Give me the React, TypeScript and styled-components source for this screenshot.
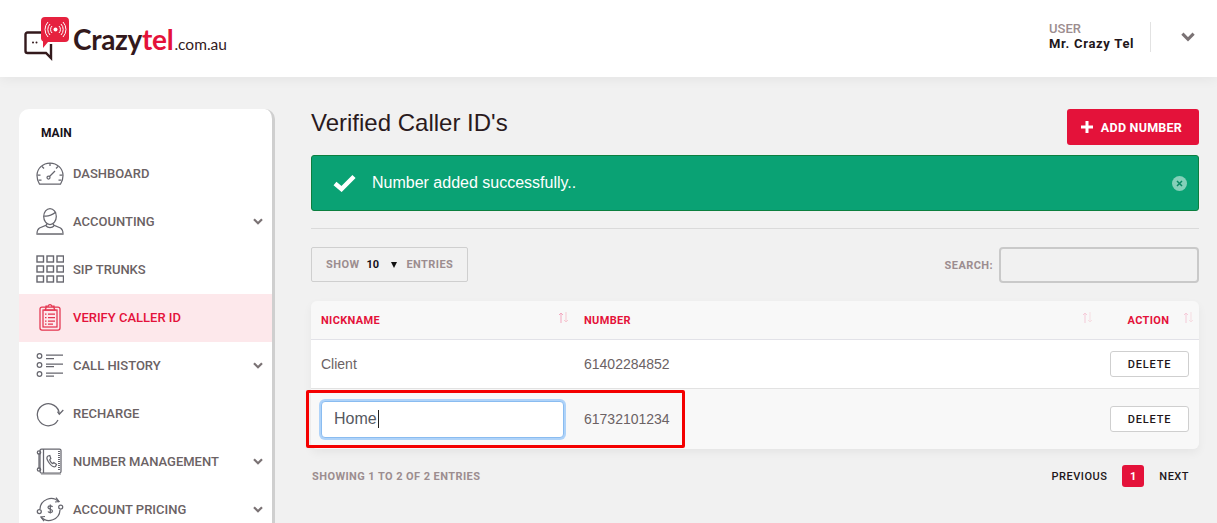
import React from "react";
import styled, { createGlobalStyle } from "styled-components";

const GlobalStyle = createGlobalStyle`
  html, body {
    margin: 0;
    height: 523px;
    overflow: hidden;
    background: #f1f1f1;
    font-family: "Liberation Sans", Arial, sans-serif;
  }
  * { box-sizing: border-box; }
`;

const Page = styled.div`
  width: 1217px;
  height: 523px;
  overflow: hidden;
  position: relative;
`;

const Header = styled.header`
  height: 77px;
  background: #fff;
  box-shadow: 0 2px 12px rgba(0, 0, 0, 0.06);
  display: flex;
  align-items: center;
  justify-content: space-between;
  padding: 0 22px 0 24px;
  position: relative;
`;

const Logo = styled.div`
  display: flex;
  align-items: flex-start;
  height: 44px;
  margin-top: 1px;
`;

const LogoText = styled.div`
  font-family: Lato, "Liberation Sans", sans-serif;
  font-weight: 700;
  font-size: 28px;
  letter-spacing: -0.3px;
  line-height: 30px;
  color: #33191c;
  margin: 7px 0 0 -1px;
  white-space: nowrap;
  em {
    font-style: normal;
    color: #e4123a;
  }
  small {
    font-size: 15.5px;
    font-weight: 400;
    letter-spacing: 0;
    margin-left: 1px;
  }
`;

const UserBox = styled.div`
  display: flex;
  align-items: center;
  margin-top: -3px;
`;

const UserInfo = styled.div`
  font-family: Roboto, sans-serif;
  width: 102px;
  height: 30px;
  border-right: 1px solid #e2e2e2;
  font-size: 13px;
  line-height: 15px;
  margin-right: 30px;
  span {
    display: block;
    margin-top: -1px;
    color: #9c8d8f;
    font-weight: 500;
  }
  strong {
    display: block;
    color: #22161a;
    font-weight: 700;
    letter-spacing: 0.7px;
  }
`;

const Body = styled.div`
  display: flex;
  padding: 32px 18px 0 19px;
  gap: 36px;
`;

const Sidebar = styled.nav`
  width: 256px;
  height: 500px;
  flex: none;
  background: #fff;
  border-right: 3px solid #cfcfcf;
  border-radius: 10px 10px 0 0;
  padding-top: 17px;
`;

const SideTitle = styled.div`
  font-family: Roboto, sans-serif;
  font-size: 12px;
  font-weight: 700;
  color: #17121a;
  line-height: 14px;
  padding-left: 22px;
  margin-bottom: 10px;
`;

const SideItem = styled.div<{ $active?: boolean }>`
  height: 48px;
  display: flex;
  align-items: center;
  padding: 0 9px 2px 17px;
  background: ${(p) => (p.$active ? "#fde8eb" : "transparent")};
  color: ${(p) => (p.$active ? "#e4123a" : "#6b6264")};
  font-family: Roboto, sans-serif;
  font-size: 13px;
  font-weight: 500;
  svg.side-icon {
    flex: none;
    width: 28px;
    height: 28px;
    margin-right: 9px;
  }
  span {
    flex: 1;
  }
`;

const Content = styled.main`
  flex: 1;
  min-width: 0;
`;

const TitleRow = styled.div`
  display: flex;
  justify-content: space-between;
  align-items: flex-start;
  height: 46px;
`;

const Title = styled.h1`
  margin: 0;
  font-size: 24px;
  font-weight: 400;
  line-height: 28px;
  color: #2a1a1d;
`;

const AddButton = styled.button`
  width: 132px;
  height: 36px;
  border: 0;
  border-radius: 3px;
  background: #e4123a;
  color: #fff;
  font-family: Roboto, sans-serif;
  font-size: 12.5px;
  font-weight: 700;
  letter-spacing: 0.25px;
  display: flex;
  align-items: center;
  justify-content: center;
  gap: 8px;
  padding: 0 3px 0 0;
`;

const Alert = styled.div`
  height: 56px;
  background: #0aa274;
  border: 1px solid #0b7f3f;
  border-radius: 3px;
  display: flex;
  align-items: center;
  padding: 0 11px 0 21px;
  color: #fff;
  font-size: 16px;
`;

const AlertText = styled.div`
  flex: 1;
  margin-left: 16px;
`;

const CloseDot = styled.div`
  width: 15px;
  height: 15px;
  border-radius: 50%;
  background: #84d0b9;
  display: flex;
  align-items: center;
  justify-content: center;
`;

const Rule = styled.hr`
  border: 0;
  border-top: 1px solid #dadada;
  margin: 17px 0 18px;
`;

const Controls = styled.div`
  display: flex;
  justify-content: space-between;
  align-items: flex-start;
  height: 54px;
`;

const ShowBox = styled.div`
  width: 157px;
  height: 35px;
  border: 1px solid #cfcfcf;
  border-radius: 2px;
  display: flex;
  align-items: center;
  padding-left: 14px;
`;

const MutedLabel = styled.span`
  font-family: Roboto, sans-serif;
  font-size: 11px;
  font-weight: 700;
  color: #9c8d8f;
  letter-spacing: 0.42px;
`;

const ShowValue = styled.span`
  font-family: Roboto, sans-serif;
  font-size: 11px;
  font-weight: 700;
  color: #17121a;
  width: 40px;
  margin-left: 7px;
  position: relative;
  &::after {
    content: "";
    position: absolute;
    right: 9px;
    top: 4px;
    border-left: 3.5px solid transparent;
    border-right: 3.5px solid transparent;
    border-top: 6px solid #111;
  }
`;

const SearchBox = styled.div`
  display: flex;
  align-items: center;
  gap: 6px;
`;

const SearchInput = styled.div`
  width: 200px;
  height: 36px;
  border: 2px solid #c9c9c9;
  border-radius: 4px;
`;

const TableCard = styled.table`
  width: 888px;
  border-collapse: separate;
  border-spacing: 0;
  table-layout: fixed;
  border-radius: 6px;
  overflow: hidden;
  box-shadow: 0 4px 10px rgba(0, 0, 0, 0.05);
  color: #6b6264;
  font-size: 14px;
`;

const HeadCell = styled.th<{ $align?: string }>`
  height: 39px;
  background: #f8f8f8;
  border-bottom: 1px solid #e2e2e8;
  padding: 0 10px;
  font-family: Roboto, sans-serif;
  font-size: 11px;
  font-weight: 700;
  color: #e4123a;
  letter-spacing: 0.35px;
  text-align: ${(p) => p.$align || "left"};
  position: relative;
`;

const SortMark = styled.svg<{ $strong?: boolean }>`
  position: absolute;
  right: 5px;
  top: 10px;
  width: 11px;
  height: 13px;
  opacity: ${(p) => (p.$strong ? 1 : 0.55)};
`;

const Row = styled.tr<{ $alt?: boolean }>`
  background: ${(p) => (p.$alt ? "#f8f8f8" : "#fff")};
`;

const Cell = styled.td<{ $h: number; $last?: boolean; $right?: boolean }>`
  height: ${(p) => p.$h}px;
  padding: 0 10px;
  border-bottom: ${(p) => (p.$last ? "0" : "1px solid #e2e2e2")};
  text-align: ${(p) => (p.$right ? "right" : "left")};
`;

const NameInput = styled.div`
  width: 243px;
  height: 37px;
  background: #fff;
  border: 1px solid #8abcf0;
  border-radius: 4px;
  box-shadow: 0 0 0 2px #afd3f9;
  font-size: 16px;
  color: #55595f;
  padding: 0 0 1px 12px;
  display: flex;
  align-items: center;
  i {
    width: 1px;
    height: 18px;
    background: #222;
    margin-left: 1px;
  }
`;

const DeleteButton = styled.button`
  width: 79px;
  height: 26px;
  background: #fff;
  border: 1px solid #cfcfcf;
  border-radius: 3px;
  font-family: Roboto, sans-serif;
  font-size: 11px;
  font-weight: 500;
  letter-spacing: 0.8px;
  color: #22161a;
  padding: 0;
`;

const Footer = styled.div`
  display: flex;
  justify-content: space-between;
  align-items: center;
  margin-top: 16px;
  padding: 0 10px 0 1px;
  height: 22px;
`;

const Pager = styled.div`
  display: flex;
  align-items: center;
  font-family: Roboto, sans-serif;
  font-size: 11px;
  font-weight: 500;
  letter-spacing: 0.5px;
  color: #22161a;
`;

const PageNumber = styled.div`
  width: 22px;
  height: 22px;
  border-radius: 3px;
  background: #e4123a;
  color: #fff;
  font-weight: 700;
  display: flex;
  align-items: center;
  justify-content: center;
  margin: 0 15px;
`;

const HighlightBox = styled.div`
  position: absolute;
  left: 306px;
  top: 390px;
  width: 379px;
  height: 58px;
  border: 3px solid #f40000;
  border-radius: 2px;
  pointer-events: none;
`;

const Chevron = ({ size = 10 }: { size?: number }) => (
  <svg width={size} height={size * 0.7} viewBox="0 0 10 7" fill="none">
    <path d="M1 1.2 5 5.2 9 1.2" stroke="#7a7274" strokeWidth="2.2" />
  </svg>
);

const grey = "#66666e";

const icons: Record<string, React.ReactNode> = {
  dashboard: (
    <>
      <path d="M3.500 25h21c1.500-2 2.500-5 2.500-8.500a13 12.500 0 0 0-26 0C1 20 2 23 3.500 25Z" />
      <path d="M14 4v3M6 7.500l2 2M22 7.500l-2 2M1.500 16h3M23.500 16h3M2.500 21h3M22.500 21h3" />
      <circle cx="12.500" cy="18.500" r="1.500" />
      <path d="m13.500 17.500 5.500-5.500" />
    </>
  ),
  accounting: (
    <>
      <ellipse cx="14" cy="9.500" rx="6.300" ry="8" />
      <path d="M8 9c4 1 8-1 12-4" />
      <path d="M10.500 16.500v1.500L3.500 21C2 22 1 24 1 27h26c0-3-1-5-2.500-6l-7-3v-1.500" />
      <path d="M10 19c2 2 6 2 8 0" />
      <path d="M1 27h26" strokeWidth="1.800" stroke="#8c8c90" />
    </>
  ),
  verify: (
    <>
      <rect x="4" y="4" width="20" height="23" rx="2" />
      <rect x="7" y="7" width="14" height="17" />
      <path d="M10 5V3h2.500a1.500 1.500 0 0 1 3 0H18v2l1 2H9Z" />
      <path d="M9 11h1.500M9 14.500h1.500M9 18h1.500M9 21h1.500M12 11h7M12 14.500h7M12 18h7M12 21h5" />
    </>
  ),
  history: (
    <>
      <circle cx="3.500" cy="5" r="2.300" />
      <circle cx="3.500" cy="14" r="2.300" />
      <circle cx="3.500" cy="23" r="2.300" />
      <path d="M10 4h17M10 7.500h8M10 13h17M10 15.500h8M10 22h17M10 25h8" />
    </>
  ),
  recharge: (
    <>
      <path d="M22 21A11 11 0 1 1 23.300 15" />
      <path d="m21.500 12.700 1.800 2.600 4-4.300" />
    </>
  ),
  number: (
    <>
      <rect x="4" y="2" width="21" height="24" rx="1.500" />
      <path d="M7.500 2v24" />
      <path d="M23 4v20" strokeWidth="2" strokeDasharray="1 1" />
      <path d="M3 6v16" />
      <circle cx="3" cy="5.500" r="1.700" />
      <circle cx="3" cy="22.500" r="1.700" />
      <path d="M5 27h20" stroke="#9a9a9e" />
      <path d="M12 9c-1.500 1-1.500 3 .5 6s5 5.500 7 4.500l1-2-2.700-2-1 1c-1 0-3-2.200-3-4l1-1-1-3Z" />
    </>
  ),
  pricing: (
    <>
      <path d="M4 14a11 11 0 0 1 19-7M24 15a11 11 0 0 1-19 7" />
      <path d="m20 2.500 3 4-4 .5M8 26l-3-4 4-.5" />
      <circle cx="3.300" cy="16.500" r="2" />
      <circle cx="24.700" cy="12" r="2" />
      <path d="M16.500 12c-.8-1.500-4.500-1.500-4.500.5s4.500 1.500 4.500 3.500-3.700 2-4.500.5M14.300 9.500v9" />
    </>
  ),
};

const SideIcon = ({ name, color = grey }: { name: string; color?: string }) => (
  <svg className="side-icon" viewBox="0 0 28 28" fill="none" stroke={color} strokeWidth="1.250">
    {icons[name]}
  </svg>
);

const TrunksIcon = () => (
  <svg className="side-icon" viewBox="0 0 28 28" fill="none" stroke={grey} strokeWidth="1.400">
    {[1, 11, 21].flatMap((y) =>
      [1, 11, 21].map((x) => <rect key={`${x}-${y}`} x={x} y={y} width="6.500" height="6" />)
    )}
  </svg>
);

const Sort = ({ strong }: { strong?: boolean }) => (
  <SortMark $strong={strong} viewBox="0 0 11 13" fill="none" stroke="#f3a8c0" strokeWidth="1">
    <path d="M3 12V2M1 4l2-2 2 2" />
    <path d="M8 1v10M6 9l2 2 2-2" stroke="#f6c9d2" />
  </SortMark>
);

const menu = [
  { name: "dashboard", label: "DASHBOARD" },
  { name: "accounting", label: "ACCOUNTING", sub: true },
  { name: "trunks", label: "SIP TRUNKS" },
  { name: "verify", label: "VERIFY CALLER ID", active: true },
  { name: "history", label: "CALL HISTORY", sub: true },
  { name: "recharge", label: "RECHARGE" },
  { name: "number", label: "NUMBER MANAGEMENT", sub: true },
  { name: "pricing", label: "ACCOUNT PRICING", sub: true },
];

const App = () => {
  return (
    <Page>
      <GlobalStyle />
      <Header>
        <Logo>
          <svg width="50" height="44" viewBox="0 0 50 44" fill="none">
            <path
              d="M17 15.500H3.500a2 2 0 0 0-2 2V34a2 2 0 0 0 2 2H22l5 5V27"
              stroke="#33191c"
              strokeWidth="2.400"
            />
            <circle cx="9" cy="25.500" r="1" fill="#33191c" />
            <circle cx="12.500" cy="25.500" r="1" fill="#33191c" />
            <path
              d="M21 0h20a4 4 0 0 1 4 4v17a4 4 0 0 1-4 4H24l-5 6v-6.500a3.500 3.500 0 0 1-2-3V4a4 4 0 0 1 4-4Z"
              fill="#e6223f"
            />
            <circle cx="31.500" cy="12.500" r="2" fill="#fff" />
            <path
              d="M28 9a5 5 0 0 0 0 7M35 9a5 5 0 0 1 0 7M26 7a8 8 0 0 0 0 11M37 7a8 8 0 0 1 0 11M24 5a11 11 0 0 0 0 15M39 5a11 11 0 0 1 0 15"
              stroke="#fff"
              strokeWidth="1"
            />
          </svg>
          <LogoText>
            Crazy<em>tel</em>
            <small>.com.au</small>
          </LogoText>
        </Logo>
        <UserBox>
          <UserInfo>
            <span>USER</span>
            <strong>Mr. Crazy Tel</strong>
          </UserInfo>
          <Chevron size={14} />
        </UserBox>
      </Header>

      <Body>
        <Sidebar>
          <SideTitle>MAIN</SideTitle>
          {menu.map((item) => (
            <SideItem key={item.label} $active={item.active}>
              {item.name === "trunks" ? (
                <TrunksIcon />
              ) : (
                <SideIcon name={item.name} color={item.active ? "#e4344f" : grey} />
              )}
              <span>{item.label}</span>
              {item.sub && <Chevron />}
            </SideItem>
          ))}
        </Sidebar>

        <Content>
          <TitleRow>
            <Title>Verified Caller ID's</Title>
            <AddButton>
              <svg width="12" height="12" viewBox="0 0 12 12" fill="none">
                <path d="M6 0v12M0 6h12" stroke="#fff" strokeWidth="3" />
              </svg>
              ADD NUMBER
            </AddButton>
          </TitleRow>

          <Alert>
            <svg width="23" height="18" viewBox="0 0 23 18" fill="none">
              <path d="M2 9.500 8.500 15 21 2.500" stroke="#fff" strokeWidth="4.500" />
            </svg>
            <AlertText>Number added successfully..</AlertText>
            <CloseDot>
              <svg width="7" height="7" viewBox="0 0 7 7" fill="none">
                <path d="M1 1l5 5M6 1 1 6" stroke="#0a8a64" strokeWidth="1.500" />
              </svg>
            </CloseDot>
          </Alert>

          <Rule />

          <Controls>
            <ShowBox>
              <MutedLabel>SHOW</MutedLabel>
              <ShowValue>10</ShowValue>
              <MutedLabel>ENTRIES</MutedLabel>
            </ShowBox>
            <SearchBox>
              <MutedLabel>SEARCH:</MutedLabel>
              <SearchInput />
            </SearchBox>
          </Controls>

          <TableCard>
            <colgroup>
              <col width="263" />
              <col width="524" />
              <col width="101" />
            </colgroup>
            <thead>
              <tr>
                <HeadCell>
                  NICKNAME
                  <Sort strong />
                </HeadCell>
                <HeadCell>
                  NUMBER
                  <Sort />
                </HeadCell>
                <HeadCell $align="center">
                  ACTION
                  <Sort />
                </HeadCell>
              </tr>
            </thead>
            <tbody>
              <Row>
                <Cell $h={49}>Client</Cell>
                <Cell $h={49}>61402284852</Cell>
                <Cell $h={49} $right>
                  <DeleteButton>DELETE</DeleteButton>
                </Cell>
              </Row>
              <Row $alt>
                <Cell $h={60} $last>
                  <NameInput>
                    Home
                    <i />
                  </NameInput>
                </Cell>
                <Cell $h={60} $last>
                  61732101234
                </Cell>
                <Cell $h={60} $last $right>
                  <DeleteButton>DELETE</DeleteButton>
                </Cell>
              </Row>
            </tbody>
          </TableCard>

          <Footer>
            <MutedLabel>SHOWING 1 TO 2 OF 2 ENTRIES</MutedLabel>
            <Pager>
              PREVIOUS
              <PageNumber>1</PageNumber>
              NEXT
            </Pager>
          </Footer>
        </Content>
      </Body>

      <HighlightBox />
    </Page>
  );
};

export default App;
